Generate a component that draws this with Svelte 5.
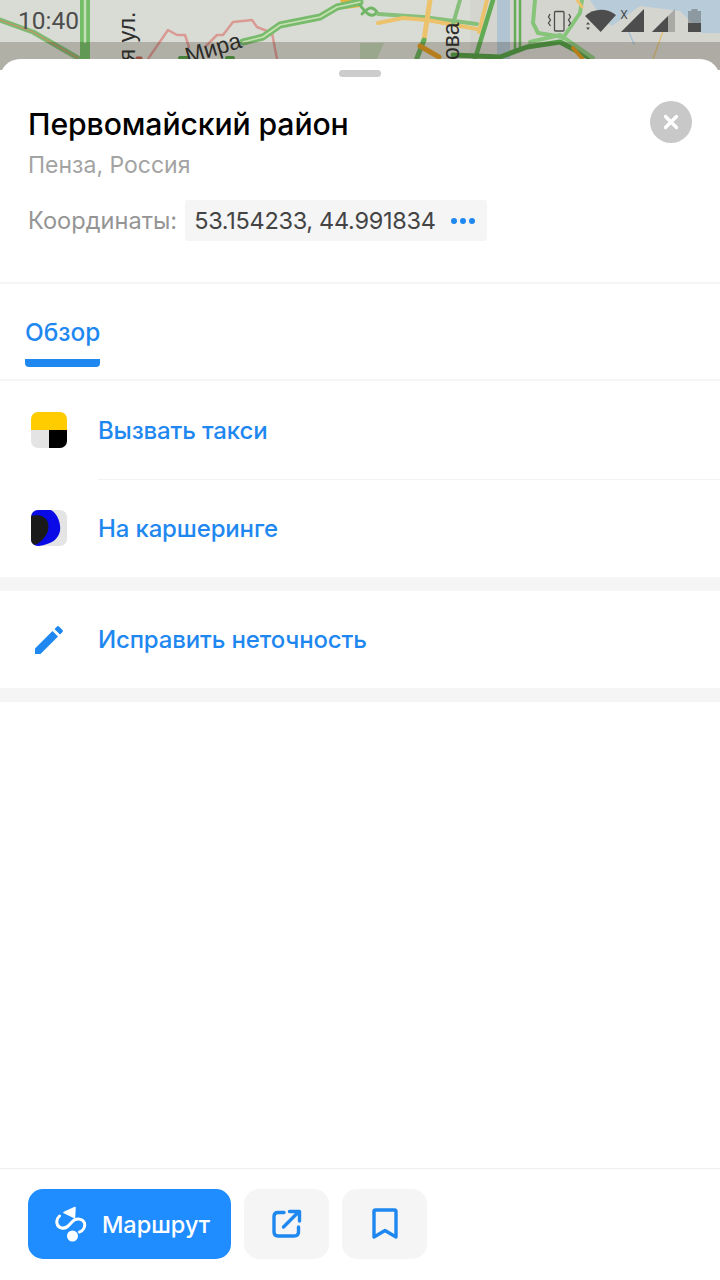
<script>
  const rows = [
    { label: 'Вызвать такси', icon: 'taxi' },
    { label: 'На каршеринге', icon: 'drive' }
  ];
</script>

<div class="screen">
  <svg class="map" viewBox="0 0 720 70" width="720" height="70" aria-hidden="true">
    <rect width="720" height="70" fill="#d9dcd4" />
    <path d="M470 0H720V70H470Z" fill="#d5d5d0" />
    <path d="M590 0H720V33H702L680 11L640 6L612 26L600 15Z" fill="#b7cbd9" />
    <path d="M497 0H510V59H497Z" fill="#b0c4d2" />
    <path d="M360 43H384L372 70H360Z" fill="#bcd0b0" />
    <path d="M340 0H360V7L345 9Z" fill="#e9b23c" />
    <g fill="none" stroke-linecap="round" stroke-linejoin="round">
      <path d="M148 59L168 30L177 35L185 35L189 47" stroke="#d99a94" stroke-width="2.500" />
      <path d="M205 47L217 35L223 35L233 22L252 20L257 27L272 33L277 59" stroke="#d99a94" stroke-width="2.500" />
      <path d="M0 20L33 32L78 58" stroke="#7cbb72" stroke-width="5" />
      <path d="M0 20L33 32L78 58" stroke="#c9906a" stroke-width="1.200" />
      <path d="M85 0V60" stroke="#72bd66" stroke-width="10" />
      <path d="M85 0V42" stroke="#c5e0b8" stroke-width="2.500" />
      <path d="M243 42L263 37L280 25L320 17L337 7L360 2" stroke="#79bb6d" stroke-width="7" />
      <path d="M243 42L263 37L280 25L320 17L337 7L360 2" stroke="#c8e2b4" stroke-width="1.600" />
      <path d="M180 58H187M227 58H233" stroke="#4f9d42" stroke-width="4" />
      <path d="M137 58H141" stroke="#b85c50" stroke-width="3" />
      <path d="M360 5C365 12 372 20 377 12C372 5 368 8 362 14" stroke="#6fb764" stroke-width="3" />
      <path d="M378 14L423 17L477 24" stroke="#86c07a" stroke-width="4" />
      <path d="M378 23L403 18L427 20L477 29" stroke="#ecc26c" stroke-width="4" />
      <path d="M430 0L424 40" stroke="#ecc26c" stroke-width="5" />
      <path d="M424 40L417 58" stroke="#64ae58" stroke-width="5" />
      <path d="M460 0L453 24" stroke="#86c07a" stroke-width="4" />
      <path d="M487 0L479 32" stroke="#ecc26c" stroke-width="4" />
      <path d="M493 0L475 59" stroke="#60ab54" stroke-width="4.500" />
      <path d="M420 46L439 57" stroke="#e39a20" stroke-width="5" />
      <path d="M515 0V50M520 0V50" stroke="#63ad57" stroke-width="2.500" />
      <path d="M535 0L533 23L538 33L563 37" stroke="#86c47a" stroke-width="4" />
      <path d="M582 0L580 13L563 38" stroke="#86c47a" stroke-width="4" />
      <path d="M577 0L582 7" stroke="#ecc26c" stroke-width="3" />
      <path d="M453 55L500 57L527 47L560 42L590 58" stroke="#4f9d42" stroke-width="5" />
      <path d="M530 42L560 35L593 58" stroke="#8ac77e" stroke-width="4" />
      <path d="M573 48L582 58" stroke="#e39a20" stroke-width="4" />
      <path d="M653 59L667 20" stroke="#e0c080" stroke-width="1.500" />
      <path d="M628 30L634 44" stroke="#a9c0d2" stroke-width="1.500" />
    </g>
    <text class="street" transform="translate(135 74) rotate(-90)" font-size="23">ая ул.</text>
    <text class="street" transform="translate(188 64) rotate(-17)" font-size="23">Мира</text>
    <text class="street" transform="translate(459 60) rotate(-90)" font-size="23">ова</text>
    <rect y="42" width="720" height="28" fill="#2d2418" opacity="0.24" />
  </svg>

  <div class="status">
    <span class="time">10:40</span>
    <svg class="sys" viewBox="0 0 175 36" width="175" height="36" aria-hidden="true">
      <rect x="9.500" y="3.500" width="9.500" height="19.500" rx="1" fill="none" stroke="#4d4d4d" stroke-width="1.300" />
      <path d="M5 6L3.500 9L5.500 12L3.500 15L5.500 18M24 6L25.500 9L23.500 12L25.500 15L23.500 18" fill="none" stroke="#4d4d4d" stroke-width="1.300" />
      <path d="M40 8C49 0 62 0 71 7L55.700 24Z" fill="#4d4d4d" />
      <path d="M41 16.500l2-2.500 2 2.500zM41 19.500l2 2.500 2-2.500z" fill="#4d4d4d" />
      <text x="79" y="11" class="x" font-size="12" text-anchor="middle">X</text>
      <path d="M76 24L99 1V24Z" fill="#4d4d4d" />
      <path d="M107 24L130 1V24Z" fill="#4d4d4d" opacity="0.32" />
      <path d="M107 24L123 8V24Z" fill="#4d4d4d" />
      <path d="M143 3h3.500V1h6v2H156v12H143z" fill="#4d4d4d" opacity="0.4" />
      <rect x="143" y="15" width="13" height="9" fill="#4d4d4d" />
    </svg>
  </div>

  <main class="sheet">
    <div class="handle"></div>

    <header class="head">
      <div class="titles">
        <h1>Первомайский район</h1>
        <p class="sub">Пенза, Россия</p>
        <div class="coords">
          <span class="coords-label">Координаты:</span>
          <span class="chip">
            <span class="coords-value">53.154233, 44.991834</span>
            <span class="dots"><i></i><i></i><i></i></span>
          </span>
        </div>
      </div>
      <button class="close" aria-label="Закрыть">
        <svg viewBox="0 0 16 16" width="16" height="16" aria-hidden="true">
          <path d="M2.500 2.500L13.500 13.500M13.500 2.500L2.500 13.500" stroke="#fff" stroke-width="3.400" stroke-linecap="round" />
        </svg>
      </button>
    </header>

    <nav class="tabs">
      <span class="tab">Обзор</span>
    </nav>

    <section class="actions">
      {#each rows as row, i}
        <div class="row" class:first={i === 0}>
          <span class="icon">
            {#if row.icon === 'taxi'}
              <svg viewBox="0 0 36 36" width="36" height="36" aria-hidden="true">
                <defs><clipPath id="tile"><rect width="36" height="36" rx="7" /></clipPath></defs>
                <g clip-path="url(#tile)">
                  <rect width="36" height="18" fill="#fc0" />
                  <rect y="18" width="18" height="18" fill="#e4e4e4" />
                  <rect x="18" y="18" width="18" height="18" fill="#000" />
                </g>
              </svg>
            {:else}
              <svg viewBox="0 0 36 36" width="36" height="36" aria-hidden="true">
                <defs><clipPath id="tile2"><rect width="36" height="36" rx="7" /></clipPath></defs>
                <g clip-path="url(#tile2)">
                  <rect width="36" height="36" fill="#e4e4e5" />
                  <path d="M0 0H20C27 4 30 14 29 21C27 30 20 34 8 36H0Z" fill="#0a0ae6" />
                  <path d="M0 6C8 4 15 6 17 13C19 20 15 28 6 34L0 36Z" fill="#1a1a1a" />
                </g>
              </svg>
            {/if}
          </span>
          <span class="label">{row.label}</span>
        </div>
      {/each}
    </section>

    <div class="band"></div>

    <section class="actions">
      <div class="row first single">
        <span class="icon">
          <svg viewBox="0 0 30 30" width="30" height="30" aria-hidden="true">
            <path d="M1 23.500L18.500 6L24 11.500L6.500 29H1ZM20.500 4L23 1.500Q24 .5 25 1.500L28.500 5Q29.500 6 28.500 7L26 9.500Z" fill="#1f88f0" />
          </svg>
        </span>
        <span class="label">Исправить неточность</span>
      </div>
    </section>

    <div class="band"></div>

    <div class="spacer"></div>

    <footer class="bar">
      <button class="route">
        <svg viewBox="0 0 32 38" width="32" height="38" aria-hidden="true">
          <path d="M20 2.500L9 7.500L19.500 12.500Z" fill="#fff" stroke="#fff" stroke-width="1.500" stroke-linejoin="round" />
          <path d="M4.500 11C0 15 1.500 22 6.500 23C12 24 14 20 17 17C21 12.500 28 13.500 29.500 18C30.500 22 28 26 24.500 27" fill="none" stroke="#fff" stroke-width="3" stroke-linecap="round" />
          <circle cx="17.500" cy="31" r="5.500" fill="#fff" />
        </svg>
        <span>Маршрут</span>
      </button>
      <button class="square" aria-label="Поделиться">
        <svg viewBox="0 0 30 30" width="30" height="30" aria-hidden="true">
          <path d="M12 3.500H6Q2 3.500 2 7.500V23Q2 27 6 27H22Q26.500 27 26.500 23V18" fill="none" stroke="#1f88f0" stroke-width="3.400" stroke-linecap="round" />
          <path d="M11.500 18L26 3.500M17.500 2.500H27.500V12" fill="none" stroke="#1f88f0" stroke-width="3.400" stroke-linecap="round" stroke-linejoin="round" />
        </svg>
      </button>
      <button class="square" aria-label="Закладка">
        <svg viewBox="0 0 26 32" width="26" height="32" aria-hidden="true">
          <path d="M2 3.500Q2 2 3.500 2H22.500Q24 2 24 3.500V29L13 22.500L2 29Z" fill="none" stroke="#1f88f0" stroke-width="3.400" stroke-linejoin="round" />
        </svg>
      </button>
    </footer>
  </main>
</div>

<style>
  :global(body) {
    margin: 0;
    background: #fff;
  }
  .screen {
    position: relative;
    width: 720px;
    height: 1280px;
    overflow: hidden;
    display: flex;
    flex-direction: column;
    font-family: Inter, "Noto Sans", sans-serif;
  }
  .map {
    position: absolute;
    inset: 0 0 auto 0;
    display: block;
  }
  .street {
    font-family: "Liberation Sans", sans-serif;
    fill: #2c2c2c;
  }
  .x {
    font-family: Roboto, sans-serif;
    fill: #4d4d4d;
  }
  .status {
    position: relative;
    height: 59px;
    flex: none;
    display: flex;
    justify-content: space-between;
    padding: 0 0 0 18px;
    box-sizing: border-box;
  }
  .time {
    font: 400 24.500px/42px Roboto, sans-serif;
    color: #4d4d4d;
  }
  .sys {
    margin-top: 8px;
    display: block;
    overflow: visible;
  }
  .sheet {
    position: relative;
    flex: 1;
    display: flex;
    flex-direction: column;
    background: #fff;
    border-radius: 20px 20px 0 0;
  }
  .handle {
    width: 42px;
    height: 7px;
    border-radius: 4px;
    background: #ccc;
    margin: 11px auto 0;
  }
  .head {
    display: flex;
    justify-content: space-between;
    align-items: flex-start;
    padding: 28px 28px 41px;
    border-bottom: 2px solid #f5f5f5;
  }
  h1 {
    margin: 0;
    font-size: 30.200px;
    line-height: 38px;
    font-weight: 500;
    color: #000;
    letter-spacing: -0.1px;
  }
  .sub {
    margin: 8px 0 0;
    font-size: 23px;
    line-height: 28px;
    color: #a3a3a3;
  }
  .coords {
    display: flex;
    align-items: center;
    gap: 8px;
    margin-top: 21px;
  }
  .coords-label {
    font-size: 23.600px;
    color: #959595;
  }
  .chip {
    display: flex;
    align-items: center;
    height: 41px;
    padding: 0 12px 0 9px;
    gap: 15px;
    background: #f5f5f5;
    border-radius: 3px;
  }
  .coords-value {
    font-size: 23.500px;
    color: #444;
    letter-spacing: -0.3px;
  }
  .dots {
    display: flex;
    gap: 3px;
  }
  .dots i {
    width: 6px;
    height: 6px;
    border-radius: 50%;
    background: #1f88f0;
  }
  .close {
    width: 42px;
    height: 42px;
    margin: -4px 0 0 0;
    padding: 0;
    border: 0;
    border-radius: 50%;
    background: #c8c8c8;
    display: flex;
    align-items: center;
    justify-content: center;
  }
  .tabs {
    display: flex;
    padding: 0 25px;
    height: 97px;
    box-sizing: border-box;
    border-bottom: 2px solid #f5f5f5;
  }
  .tab {
    height: 83px;
    box-sizing: border-box;
    padding-top: 33px;
    font-size: 24.400px;
    line-height: 30px;
    font-weight: 500;
    color: #1f88f0;
    border-bottom: 8px solid #1f88f0;
    border-radius: 0 0 4px 4px;
  }
  .actions {
    display: flex;
    flex-direction: column;
  }
  .row {
    position: relative;
    height: 98px;
    display: flex;
    align-items: center;
  }
  .row.single {
    height: 97px;
  }
  .row:not(.first)::before {
    content: "";
    position: absolute;
    top: 0;
    left: 98px;
    right: 0;
    height: 1px;
    background: #f3f3f3;
  }
  .icon {
    width: 98px;
    display: flex;
    justify-content: center;
    box-sizing: border-box;
    padding-right: 1px;
  }
  .label {
    font-size: 24px;
    font-weight: 500;
    color: #1f88f0;
    letter-spacing: -0.15px;
  }
  .band {
    height: 14px;
    background: #f5f5f5;
    flex: none;
  }
  .spacer {
    flex: 1;
  }
  .bar {
    flex: none;
    height: 112px;
    box-sizing: border-box;
    border-top: 1px solid #eee;
    padding: 20px 28px 0;
    display: flex;
    gap: 13px;
  }
  .bar button {
    height: 70px;
    border: 0;
    padding: 0;
    border-radius: 15px;
    display: flex;
    align-items: center;
    justify-content: center;
    font: inherit;
  }
  .bar .route {
    width: 203px;
    gap: 15px;
    padding-left: 6px;
    box-sizing: border-box;
    background: #1f8dff;
    color: #fff;
    font-size: 23.500px;
    font-weight: 500;
  }
  .square {
    width: 85px;
    background: #f5f5f5;
  }
</style>
